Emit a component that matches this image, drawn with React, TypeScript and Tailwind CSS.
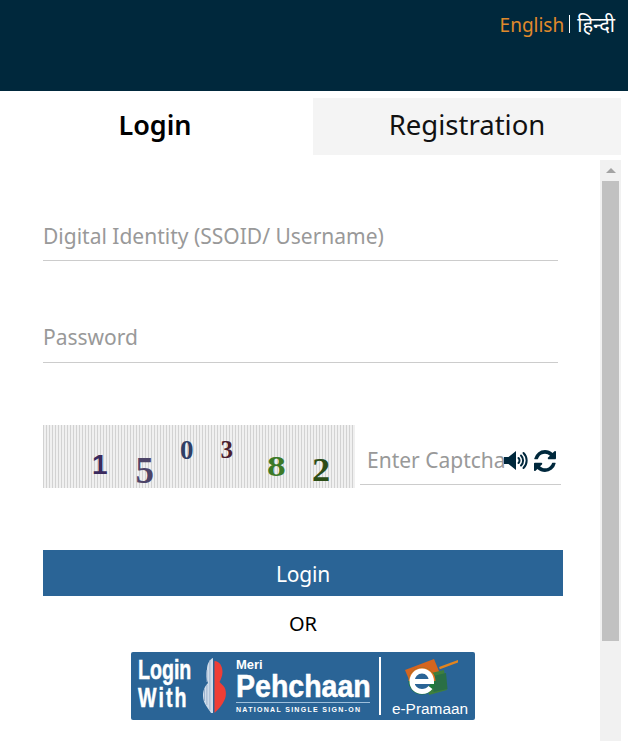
import React from "react";

const font = { fontFamily: '"Noto Sans", sans-serif' };

function Field({ label, mt, pb }: { label: string; mt: string; pb: string }) {
  return (
    <div className={`${mt} ${pb} w-[515px] h-[44px] border-b border-[#cccccc] flex items-center text-[21px] text-[#999999]`}>
      {label}
    </div>
  );
}

function Speaker() {
  return (
    <svg width="24" height="19" viewBox="0 0 24 19" fill="none" className="block">
      <path fill="#00283c" d="M0 6h4.500L12 0v19l-7.500-6H0z" />
      <g stroke="#00283c" strokeWidth="2" strokeLinecap="round">
        <path d="M14.500 7a3.500 3.500 0 0 1 0 5" />
        <path d="M17 4.500a7 7 0 0 1 0 10" />
        <path d="M19.500 2a10.500 10.500 0 0 1 0 15" />
      </g>
    </svg>
  );
}

function Refresh() {
  return (
    <svg width="22" height="22" viewBox="0 0 1536 1536" fill="#00283c" className="block">
      <path d="M1511 928q0 5-1 7-64 268-268 434.500T764 1536q-146 0-282.500-55T238 1324l-129 129q-19 19-45 19t-45-19-19-45V960q0-26 19-45t45-19h448q26 0 45 19t19 45-19 45l-137 137q71 66 161 102t187 36q134 0 250-65t186-179q11-17 53-117 8-23 30-23h192q13 0 22.500 9.500t9.500 22.500zm25-800v448q0 26-19 45t-45 19h-448q-26 0-45-19t-19-45 19-45l138-138Q969 256 768 256q-134 0-250 65T332 500q-11 17-53 117-8 23-30 23H50q-13 0-22.500-9.500T18 608v-7q65-268 270-434.500T768 0q146 0 284 55.500T1297 212l130-129q19-19 45-19t45 19 19 45z" />
    </svg>
  );
}

function PersonMark() {
  return (
    <svg width="24" height="55" viewBox="0 0 24 55" className="block">
      <path fill="#cfdcea" d="M11 0v55H9c-3-5-8-10-8-17 0-6 2-10 5-13-2-4-2-9-1-14 0-5 3-10 6-11z" />
      <path fill="#8ea8c6" d="M7.500 2h.8v50h-.8zM4.500 12h.8v12h-.8zM4.500 27h.8v20h-.8zM2 31h.8v12H2z" />
      <path fill="#ef3e36" d="M12.500 3c5 0 8 5 8 11 0 4-2 8-3 10l4 4c3 3 3 10 1 14-2 5-6 9-10 13z" />
    </svg>
  );
}

function EMark() {
  return (
    <svg width="55" height="45" viewBox="8 5 55 45" className="block">
      <path fill="#d4651f" d="M10 20 39 9l7 17-29 11z" />
      <path fill="#e2841f" d="M44 17l19-7 .8 2.200-19 7z" />
      <path fill="#3f7f3c" d="M32 24l17-4 3 20-18 5z" />
      <path fill="#2a6f45" d="M38 26l13-3 1.500 16-14 3z" />
      <circle cx="27" cy="31" r="13.500" fill="#1f7a3a" />
      <path fill="#e2721f" d="M13.500 31a13.500 13.500 0 0 1 27 0z" />
      <circle cx="27" cy="31" r="9" fill="#2a6496" />
      <path
        d="M17 31.500h19.500c0-6-4-10.500-9.500-10.500s-10 4.500-10 10.500 4.500 10 10 10c3.500 0 6.500-1.500 8.500-4"
        fill="none"
        stroke="#ffffff"
        strokeWidth="5"
      />
    </svg>
  );
}

function Logo() {
  return (
    <div
      className="mt-[13px] w-[344px] h-[68px] bg-[#2a6496] rounded-[2px] flex items-start overflow-hidden text-white"
      style={{ fontFamily: '"Liberation Sans", sans-serif' }}
    >
      <div className="ml-[7px] mt-[4px] w-[58px] shrink-0 font-bold text-[28px] leading-[28px] [-webkit-text-stroke:0.5px_white] [transform:scaleX(0.7)] origin-left whitespace-nowrap">
        <div>Login</div>
        <div className="tracking-[3px]">With</div>
      </div>
      <div className="ml-[6px] mt-[6px] shrink-0">
        <PersonMark />
      </div>
      <div className="ml-[10px] mt-[7px] w-[134px] shrink-0">
        <div className="font-bold text-[13px] leading-[12px]">Meri</div>
        <div className="font-bold text-[31px] leading-[29px] mt-[1px] [-webkit-text-stroke:0.5px_white] [transform:scaleX(0.92)] origin-left whitespace-nowrap">Pehchaan</div>
        <div className="border-t border-[#9fc0dc] mt-[1px] pt-[2px] font-bold text-[7px] leading-[9px] tracking-[1.3px] whitespace-nowrap">NATIONAL SINGLE SIGN-ON</div>
      </div>
      <div className="ml-[9px] mt-[5px] w-[2px] h-[58px] bg-white shrink-0" />
      <div className="ml-[11px] mt-[3px] flex flex-col items-center w-[76px] shrink-0">
        <EMark />
        <div className="text-[15.400px] leading-[16px] mt-[1px] whitespace-nowrap">e-Pramaan</div>
      </div>
    </div>
  );
}

function Captcha() {
  const digits = [
    { c: "1", top: "mt-[26px]", ml: "ml-[49px]", size: "text-[28px]", color: "text-[#3b2a5e]", f: '"Liberation Sans", sans-serif', x: "" },
    { c: "5", top: "mt-[27px]", ml: "ml-[28px]", size: "text-[37px]", color: "text-[#4d4468]", f: '"Liberation Serif", serif', x: "" },
    { c: "0", top: "mt-[12px]", ml: "ml-[26px]", size: "text-[27px]", color: "text-[#2f3f66]", f: '"Liberation Serif", serif', x: "" },
    { c: "3", top: "mt-[12px]", ml: "ml-[27px]", size: "text-[25px]", color: "text-[#4a1f30]", f: '"Liberation Serif", serif', x: "" },
    { c: "8", top: "mt-[26px]", ml: "ml-[34px]", size: "text-[30px]", color: "text-[#3c7a28]", f: '"Liberation Serif", serif', x: "[transform:scaleX(1.25)] origin-left" },
    { c: "2", top: "mt-[29px]", ml: "ml-[30px]", size: "text-[33px]", color: "text-[#2c4d17]", f: '"Liberation Serif", serif', x: "[transform:scaleX(1.1)] origin-left" },
  ];
  return (
    <div className="w-[312px] h-[63px] shrink-0 flex items-start bg-[repeating-linear-gradient(90deg,#d2d2d2_0px,#d2d2d2_1px,#f0f0f0_1px,#f0f0f0_3px)]">
      {digits.map((d) => (
        <span key={d.c} className={`${d.top} ${d.ml} ${d.size} ${d.color} ${d.x} font-bold leading-none`} style={{ fontFamily: d.f }}>
          {d.c}
        </span>
      ))}
    </div>
  );
}

export default function App() {
  return (
    <div className="w-[628px] h-[741px] overflow-hidden bg-white flex flex-col" style={font}>
      <header className="h-[91px] bg-[#00283c] flex justify-end items-start pt-[11px] pr-[13px] shrink-0">
        <span className="text-[19px] leading-[28px] text-[#e08a2b]">English</span>
        <span className="ml-[5px] mt-[4px] w-px h-[18px] bg-white" />
        <span className="ml-[7px] text-[20px] leading-[28px] text-white" style={{ fontFamily: '"Noto Sans", "Noto Sans Devanagari", "Lohit Devanagari", sans-serif' }}>हिन्दी</span>
      </header>

      <div className="flex pt-[7px] h-[64px] shrink-0 leading-none">
        <div className="w-[310px] h-[57px] pb-[4px] flex items-center justify-center font-semibold text-[27px] text-black">Login</div>
        <div className="ml-[3px] w-[308px] h-[57px] pb-[4px] flex items-center justify-center bg-[#f4f4f4] text-[27.500px] text-[#111111]">Registration</div>
      </div>

      <div className="flex flex-1 min-h-0 pt-[5px]">
        <main className="w-[600px] pl-[43px] flex flex-col shrink-0">
          <Field label="Digital Identity (SSOID/ Username)" mt="mt-[57px]" pb="pb-[4px]" />
          <Field label="Password" mt="mt-[58px]" pb="pb-[6px]" />

          <div className="mt-[62px] flex">
            <Captcha />
            <div className="ml-[5px] w-[201px] h-[60px] border-b border-[#cccccc] flex items-center pt-[12px] pl-[7px] text-[21px] text-[#999999]">
              <span className="whitespace-nowrap w-[137px] shrink-0">Enter Captcha</span>
              <span className="shrink-0"><Speaker /></span>
              <span className="ml-[6px] shrink-0"><Refresh /></span>
            </div>
          </div>

          <button className="mt-[62px] w-[520px] h-[46px] pt-[3px] bg-[#2a6496] text-white text-[21px] tracking-[-0.2px] flex items-center justify-center">Login</button>
          <div className="w-[520px] flex flex-col items-center">
            <div className="mt-[13px] text-[20px] leading-[30px] text-black">OR</div>
            <Logo />
          </div>
        </main>

        <div className="w-[21px] shrink-0 bg-[#f1f1f1] flex flex-col items-center">
          <div className="h-[21px] w-full flex items-center justify-center shrink-0">
            <div className="w-0 h-0 border-l-[5px] border-r-[5px] border-b-[5px] border-l-transparent border-r-transparent border-b-[#a3a3a3]" />
          </div>
          <div className="w-[17px] h-[460px] bg-[#c1c1c1]" />
        </div>
      </div>
    </div>
  );
}
